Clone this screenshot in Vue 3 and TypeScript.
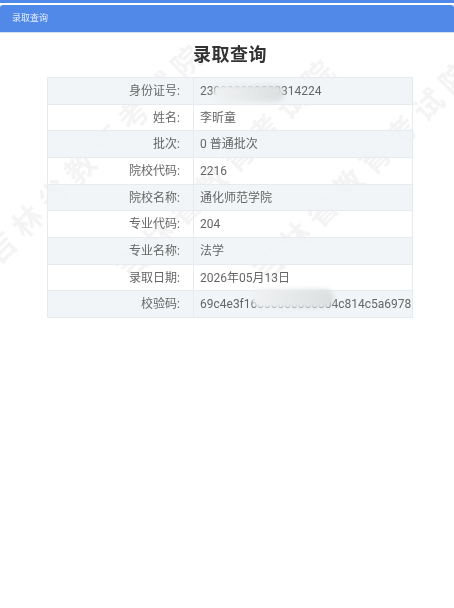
<script setup lang="ts">
interface Row {
  label: string
  value: string
}

const rows: Row[] = [
  { label: '身份证号:', value: '230000000000314224' },
  { label: '姓名:', value: '李昕童' },
  { label: '批次:', value: '0 普通批次' },
  { label: '院校代码:', value: '2216' },
  { label: '院校名称:', value: '通化师范学院' },
  { label: '专业代码:', value: '204' },
  { label: '专业名称:', value: '法学' },
  { label: '录取日期:', value: '2026年05月13日' },
  { label: '校验码:', value: '69c4e3f16000000000004c814c5a6978' },
]

const marks = [
  { x: -9, y: 244 },
  { x: 122, y: 259 },
  { x: 259, y: 261 },
]
</script>

<template>
  <div class="page">
    <div class="marks" aria-hidden="true">
      <span
        v-for="(m, i) in marks"
        :key="i"
        class="mark"
        :style="{ left: m.x + 'px', top: m.y + 'px' }"
      >吉林省教育考试院</span>
    </div>
    <div class="strip"></div>
    <header class="bar">录取查询</header>
    <h1 class="title">录取查询</h1>
    <div class="table">
      <div v-for="(r, i) in rows" :key="r.label" class="row" :class="{ odd: i % 2 === 0 }">
        <div class="label">{{ r.label }}</div>
        <div class="value">{{ r.value }}</div>
      </div>
      <i class="smudge s1"></i>
      <i class="smudge s2"></i>
    </div>
  </div>
</template>

<style>
html, body { margin: 0; background: #fff; }
</style>

<style scoped>
.page {
  position: relative;
  width: 454px;
  height: 608px;
  overflow: hidden;
  background: #fff;
  font-family: Roboto, "Noto Sans CJK SC", sans-serif;
  filter: blur(0.45px);
}
.marks { position: absolute; inset: 0; }
.mark {
  position: absolute;
  font-size: 30px;
  line-height: 30px;
  font-weight: 700;
  letter-spacing: 7.6px;
  white-space: nowrap;
  color: #f4f4f4;
  transform: rotate(-45deg);
  transform-origin: left center;
}
.strip { position: relative; height: 3px; background: #5089e8; }
.bar {
  position: relative;
  height: 27px;
  margin-top: 2px;
  padding-left: 12px;
  line-height: 27px;
  font-size: 9px;
  color: #e6eefb;
  background: #5089e8;
  border-radius: 3px 3px 0 0;
  box-shadow: 0 1px 0 #cfe0f7;
}
.title {
  position: relative;
  margin: 11px 0 0;
  padding-left: 6px;
  height: 34px;
  line-height: 24px;
  text-align: center;
  font-size: 18px;
  letter-spacing: 0.5px;
  font-weight: 700;
  color: #333;
}
.table {
  position: relative;
  width: 366px;
  margin: 0 0 0 47px;
  border: 1px solid #e6ebef;
  border-width: 1px 1px 0 1px;
  box-sizing: border-box;
}
.row {
  display: grid;
  grid-template-columns: 146px 1fr;
  height: 26.67px;
  line-height: 26.5px;
  box-sizing: border-box;
  border-bottom: 1px solid #e6ebef;
  font-size: 12px;
  color: #666;
}
.row.odd { background: rgba(238, 243, 246, 0.85); }
.label {
  text-align: right;
  padding-right: 13px;
  border-right: 1px solid #e6ebef;
}
.value { padding-left: 6px; white-space: nowrap; }
.smudge {
  position: absolute;
  border-radius: 9px;
  background: linear-gradient(90deg, #f0f2f3, #dcdfe0);
  filter: blur(2px);
}
.s1 { left: 165px; top: 7px; width: 71px; height: 17px; }
.s2 { left: 204px; top: 211px; width: 82px; height: 19px; }
</style>
